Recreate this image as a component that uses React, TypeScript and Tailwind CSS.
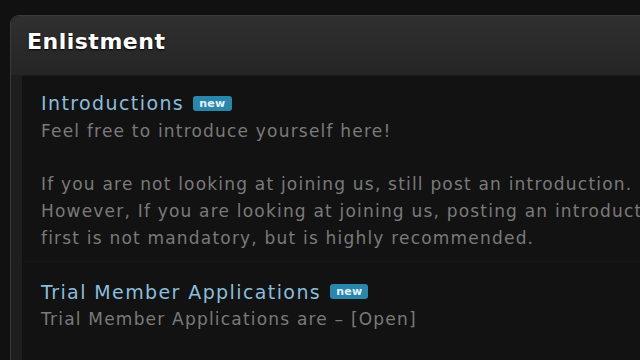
const forums = [
    {
        title: 'Introductions',
        lines: [
            'Feel free to introduce yourself here!',
            '',
            'If you are not looking at joining us, still post an introduction.',
            'However, If you are looking at joining us, posting an introduction',
            'first is not mandatory, but is highly recommended.',
        ],
    },
    {
        title: 'Trial Member Applications',
        lines: ['Trial Member Applications are – [Open]'],
    },
];

export default function App() {
    return (
        <div className="h-screen w-full overflow-hidden bg-[#111111] pt-[15px] pl-[10px] font-['DejaVu_Sans',sans-serif]">
            <div className="h-full rounded-tl-[9px] border-t border-l border-[#3a3a3a] bg-[#1e1e1e]">
                <div className="h-[59px] rounded-tl-[9px] bg-gradient-to-b from-[#303030] to-[#252525] px-[16px] pt-[12px]">
                    <h1 className="text-[22px] leading-[28px] font-bold tracking-[0.5px] text-white [text-shadow:0_1px_2px_#000]">Enlistment</h1>
                </div>
                <div className="ml-[11px] h-full overflow-hidden border-t border-[#1a1a1a] bg-[#121212]">
                    {forums.map((forum, i) => (
                        <div
                            key={forum.title}
                            className={`whitespace-nowrap px-[19px] ${i === 0 ? 'pt-[15px] pb-[10px]' : 'border-t border-[#181818] pt-[17px]'}`}
                        >
                            <div className="flex h-[25px] items-center gap-[9px]">
                                <span className="text-[19px] tracking-[1.4px] text-[#8bbddc]">{forum.title}</span>
                                <span className="rounded-[3px] bg-[#2a86aa] px-[6px] text-[11px] leading-[15px] font-bold tracking-[0.3px] text-[#e4f2f8]">new</span>
                            </div>
                            <div className="mt-[2px] text-[17px] leading-[26.7px] tracking-[1.2px] text-[#7a7a7a]">
                                {forum.lines.map((line, j) => (
                                    <div key={j} className="h-[26.7px]">{line}</div>
                                ))}
                            </div>
                        </div>
                    ))}
                </div>
            </div>
        </div>
    );
}
